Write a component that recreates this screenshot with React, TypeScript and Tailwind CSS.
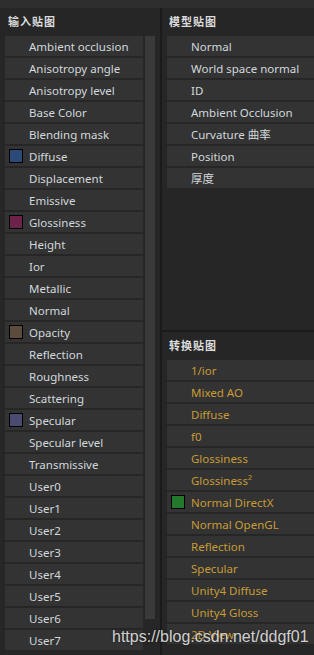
const inputMaps: { name: string; swatch?: string }[] = [
  { name: "Ambient occlusion" },
  { name: "Anisotropy angle" },
  { name: "Anisotropy level" },
  { name: "Base Color" },
  { name: "Blending mask" },
  { name: "Diffuse", swatch: "bg-[#2a4b77]" },
  { name: "Displacement" },
  { name: "Emissive" },
  { name: "Glossiness", swatch: "bg-[#6c2249]" },
  { name: "Height" },
  { name: "Ior" },
  { name: "Metallic" },
  { name: "Normal" },
  { name: "Opacity", swatch: "bg-[#5a4b3b]" },
  { name: "Reflection" },
  { name: "Roughness" },
  { name: "Scattering" },
  { name: "Specular", swatch: "bg-[#4b4a72]" },
  { name: "Specular level" },
  { name: "Transmissive" },
  { name: "User0" },
  { name: "User1" },
  { name: "User2" },
  { name: "User3" },
  { name: "User4" },
  { name: "User5" },
  { name: "User6" },
  { name: "User7" },
]

const meshMaps = ["Normal", "World space normal", "ID", "Ambient Occlusion", "Curvature 曲率", "Position", "厚度"]

const convertedMaps: { name: string; swatch?: string }[] = [
  { name: "1/ior" },
  { name: "Mixed AO" },
  { name: "Diffuse" },
  { name: "f0" },
  { name: "Glossiness" },
  { name: "Glossiness²" },
  { name: "Normal DirectX", swatch: "bg-[#23782b]" },
  { name: "Normal OpenGL" },
  { name: "Reflection" },
  { name: "Specular" },
  { name: "Unity4 Diffuse" },
  { name: "Unity4 Gloss" },
  { name: "2D View" },
]

const Row = ({ name, swatch, orange }: { name: string; swatch?: string; orange?: boolean }) => (
  <div className="h-5 bg-[#333333] flex items-center relative shrink-0">
    {swatch && <div className={`absolute left-1 top-[3px] w-[14px] h-[14px] border border-black ${swatch}`}></div>}
    <span className={`pl-6 pt-[1px] text-[11.5px] leading-none whitespace-nowrap ${orange ? "text-[#c79c36]" : "text-[#d2d8dd]"}`}>{name}</span>
  </div>
)

const Header = ({ children }: { children: string }) => (
  <div className="h-7 flex items-center text-[11px] font-bold text-[#dcdcdc] tracking-[1px]">{children}</div>
)

export default function App() {
  return (
    <div
      className="w-[314px] h-[655px] bg-[#262626] overflow-hidden relative flex flex-col"
      style={{ fontFamily: '"Noto Sans", "Noto Sans CJK SC", sans-serif' }}
    >
      {/* top strip */}
      <div className="h-2 bg-[#2e2e2e] shrink-0"></div>

      <div className="flex flex-1 min-h-0">
        {/* input maps */}
        <div className="w-[160px] shrink-0 flex flex-col">
          <div className="pl-[8px]"><Header>输入贴图</Header></div>
          <div className="flex gap-[2px] pl-[5px]">
            <div className="w-[138px] flex flex-col gap-[2px]">
              {inputMaps.map(m => <Row key={m.name} {...m} />)}
            </div>
            <div className="w-[10px] h-[583px] bg-[#3a3a3a]"></div>
          </div>
        </div>

        <div className="w-[2px] bg-[#1b1b1b] shrink-0"></div>

        {/* right side */}
        <div className="flex-1 flex flex-col min-w-0">
          <div className="h-[322px] shrink-0 flex flex-col">
            <div className="pl-[7px]"><Header>模型贴图</Header></div>
            <div className="pl-[5px] flex flex-col gap-[2px]">
              {meshMaps.map(m => <Row key={m} name={m} />)}
            </div>
          </div>
          <div className="h-[2px] bg-[#1b1b1b] shrink-0"></div>
          <div className="flex flex-col">
            <div className="pl-[7px]"><Header>转换贴图</Header></div>
            <div className="pl-[5px] flex flex-col gap-[2px]">
              {convertedMaps.map(m => <Row key={m.name} {...m} orange />)}
            </div>
          </div>
        </div>
      </div>

      {/* watermark */}
      <div
        className="absolute left-[112px] top-[625px] text-[16px] text-[#e8e8e8]/90 whitespace-nowrap [text-shadow:0_0_2px_rgba(0,0,0,0.6)]"
        style={{ fontFamily: '"Liberation Sans", sans-serif' }}
      >
        https://blog.csdn.net/ddgf01
      </div>
    </div>
  )
}
